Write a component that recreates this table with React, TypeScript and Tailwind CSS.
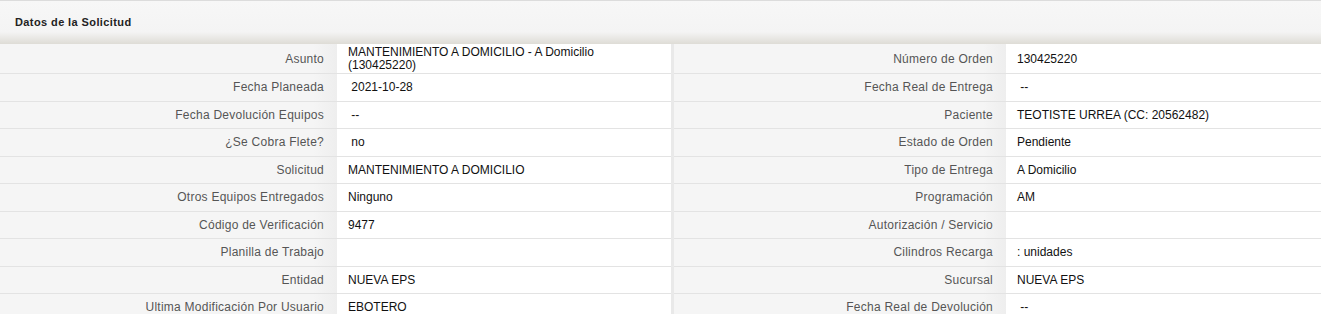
const rows: [string, string, string, string][] = [
  ['Asunto', 'MANTENIMIENTO A DOMICILIO - A Domicilio (130425220)', 'Número de Orden', '130425220'],
  ['Fecha Planeada', ' 2021-10-28', 'Fecha Real de Entrega', ' --'],
  ['Fecha Devolución Equipos', ' --', 'Paciente', 'TEOTISTE URREA (CC: 20562482)'],
  ['¿Se Cobra Flete?', ' no', 'Estado de Orden', 'Pendiente'],
  ['Solicitud', 'MANTENIMIENTO A DOMICILIO', 'Tipo de Entrega', 'A Domicilio'],
  ['Otros Equipos Entregados', 'Ninguno', 'Programación', 'AM'],
  ['Código de Verificación', '9477', 'Autorización / Servicio', ''],
  ['Planilla de Trabajo', '', 'Cilindros Recarga', ': unidades'],
  ['Entidad', 'NUEVA EPS', 'Sucursal', 'NUEVA EPS'],
  ['Ultima Modificación Por Usuario', 'EBOTERO', 'Fecha Real de Devolución', ' --'],
];

const labelCls =
  'flex items-center justify-end pt-px pr-[13px] tracking-[0.25px] text-[#555] bg-[linear-gradient(to_right,#f5f5f5_93%,#eeeeee)] border-b border-[#e3e3e3]';
const valueCls =
  'flex items-center pt-px pl-[11px] pr-2 text-[#111] bg-white border-b border-[#e3e3e3] whitespace-pre-wrap';

export default function App() {
  return (
    <div className="w-[1321px] h-[314px] overflow-hidden bg-white text-[12px] font-['Liberation_Sans',Arial,sans-serif]">
      <div className="h-[44px] flex items-center pl-[15px] border-t border-[#dcdcdc] bg-[linear-gradient(to_bottom,#f7f7f7_0%,#f4f4f4_72%,#dedcd6_100%)]">
        <span className="font-bold text-[11px] tracking-[0.4px] text-[#222]">Datos de la Solicitud</span>
      </div>
      {rows.map((r, i) => (
        <div
          key={i}
          className={`grid grid-cols-[337px_334px_3px_332px_1fr] leading-[13px] ${i === 0 ? 'h-[30px]' : 'h-[27.5px]'}`}
        >
          <div className={labelCls}>{r[0]}</div>
          <div className={valueCls}>{r[1]}</div>
          <div className="bg-[#e9e9e9]" />
          <div className={labelCls}>{r[2]}</div>
          <div className={valueCls}>{r[3]}</div>
        </div>
      ))}
    </div>
  );
}
